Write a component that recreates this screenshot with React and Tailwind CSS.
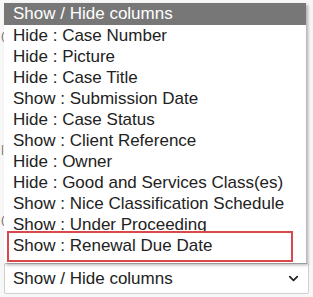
import { ChevronDown } from "lucide-react";

const rows = [
  "Hide : Case Number",
  "Hide : Picture",
  "Hide : Case Title",
  "Show : Submission Date",
  "Hide : Case Status",
  "Show : Client Reference",
  "Hide : Owner",
  "Hide : Good and Services Class(es)",
  "Show : Nice Classification Schedule",
  "Show : Under Proceeding",
  "Show : Renewal Due Date",
];

export default function App() {
  return (
    <div
      className="relative w-[313px] h-[297px] overflow-hidden bg-[#f7f7f7] text-[#222]"
      style={{ fontFamily: '"Liberation Sans", Arial, sans-serif' }}
    >
      {/* page behind the open list */}
      <div className="flex flex-col h-full">
        <div className="flex-1 text-[11px] text-[#666] leading-none pl-[1px]">
          <div className="pt-[31px]">(</div>
          <div className="pt-[102px]">|</div>
          <div className="pt-[60px]">(</div>
        </div>
        <div className="mx-[4px] mb-[3px] h-[31px] flex items-center justify-between border border-[#cfcfcf] rounded-[2px] bg-white pl-[8px] pr-[7px] text-[17px]">
          <span>Show / Hide columns</span>
          <ChevronDown size={15} strokeWidth={2.75} className="text-[#222]" />
        </div>
      </div>

      {/* opened native select list */}
      <div className="absolute left-[4px] top-[3px] w-[302px] h-[260px] bg-white shadow-[2px_2px_3px_rgba(0,0,0,0.3)] text-[17px] leading-[21px]">
        <div className="h-[22px] pl-[9px] bg-[#777777] text-white">Show / Hide columns</div>
        {rows.map((r) => (
          <div key={r} className="h-[21px] pl-[9px] whitespace-nowrap">
            {r}
          </div>
        ))}
        <div className="absolute left-[3px] top-[228px] w-[286px] h-[31px] border-2 border-[#d9484a]" />
      </div>
    </div>
  );
}
